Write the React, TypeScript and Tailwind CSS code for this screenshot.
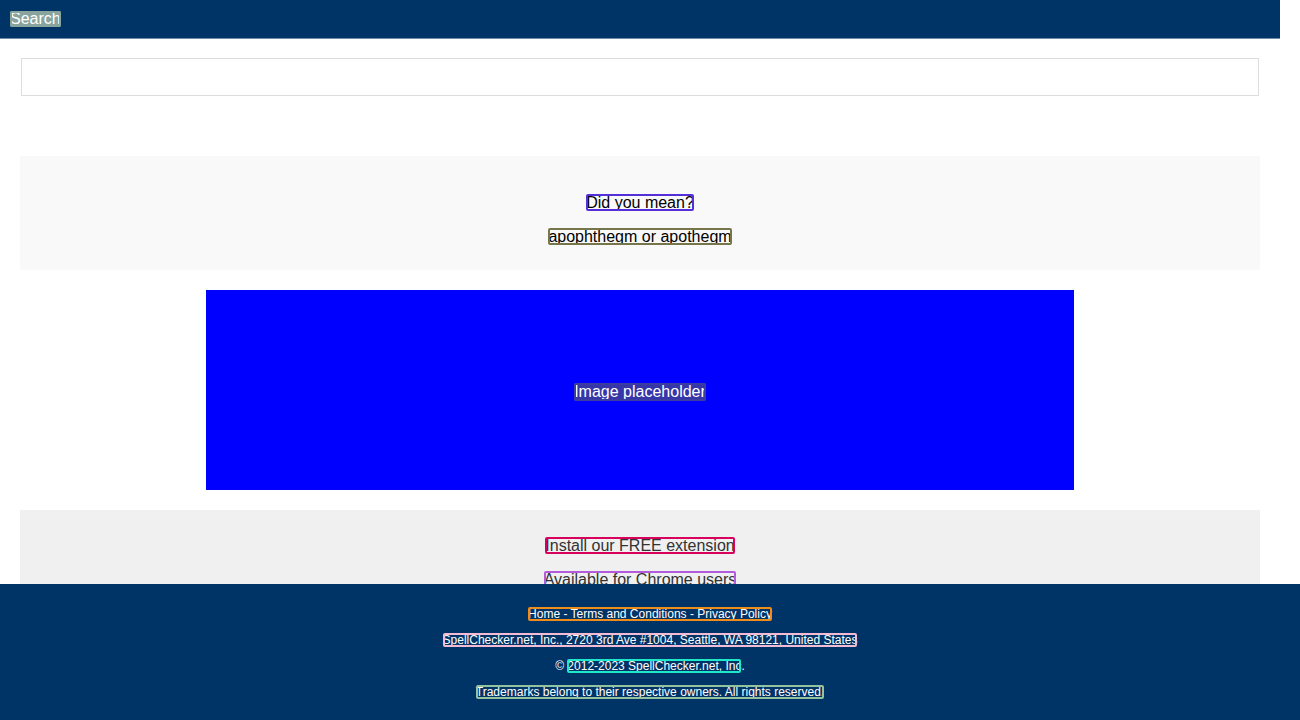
import React from 'react';

// outlined text spans, as marked in the reference
const Mark: React.FC<{ className: string; children: React.ReactNode }> = ({ className, children }) => (
    <span className={`rounded-[2px] outline-2 -outline-offset-2 ${className}`}>{children}</span>
);

export default function App() {
    return (
        <div className="min-h-[720px] bg-white font-['Liberation_Sans',Arial,sans-serif] text-black">
            {/* Header */}
            <header className="w-[1280px] h-[39px] bg-[#003366] border-b border-[#6f8cab] flex items-center px-[10px]">
                <span className="text-white text-base leading-[16px] rounded-[2px] bg-[#88a49c] outline-2 -outline-offset-2 outline-[#88a49c]">Search</span>
            </header>

            <main className="w-[1280px] px-5 pb-[150px]">
                <div className="pt-[19px] pl-px">
                    <input
                        type="text"
                        className="block w-[1238px] h-[38px] border border-[#dddddd] bg-white outline-none px-2 text-base"
                    />
                </div>

                <section className="mt-[60px] bg-[#f9f9f9] pt-[38px] pb-[24px] flex flex-col items-center gap-4 text-base leading-[18px]">
                    <p><Mark className="outline-[#5530d8]">Did you mean?</Mark></p>
                    <p><Mark className="outline-[#76764a]">apophthegm or apothegm</Mark></p>
                </section>

                <div className="mt-5 flex justify-center">
                    <div className="w-[868px] h-[200px] bg-[#0000ff] flex items-center justify-center pt-[3px] text-white text-base leading-[18px]">
                        <span className="rounded-[2px] bg-[#3636a8] outline-2 -outline-offset-2 outline-[#3c3ca0]">Image placeholder</span>
                    </div>
                </div>

                <section className="mt-5 bg-[#f0f0f0] pt-[27px] pb-[26px] flex flex-col items-center gap-4 text-base leading-[18px] text-[#333333]">
                    <p><Mark className="outline-[#d8005c]">Install our FREE extension</Mark></p>
                    <p><Mark className="outline-[#b35bdc]">Available for Chrome users</Mark></p>
                </section>
            </main>

            {/* Footer */}
            <footer className="fixed bottom-0 left-0 w-[1300px] h-[136px] bg-[#003366] text-white text-xs leading-[14px] flex flex-col items-center pt-[23px] gap-3">
                <p>
                    <Mark className="outline-[#ee8c1c]">
                        <a href="#" className="text-white">Home</a> - <a href="#" className="text-white">Terms and Conditions</a> - <a href="#" className="text-white">Privacy Policy</a>
                    </Mark>
                </p>
                <p><Mark className="outline-[#f4bcd4]">SpellChecker.net, Inc., 2720 3rd Ave #1004, Seattle, WA 98121, United States</Mark></p>
                <p>© <Mark className="outline-[#1ee8c8]"><a href="#" className="text-white">2012-2023 SpellChecker.net, Inc</a></Mark>.</p>
                <p><Mark className="outline-[#93c29e]">Trademarks belong to their respective owners. All rights reserved.</Mark></p>
            </footer>
        </div>
    );
}
